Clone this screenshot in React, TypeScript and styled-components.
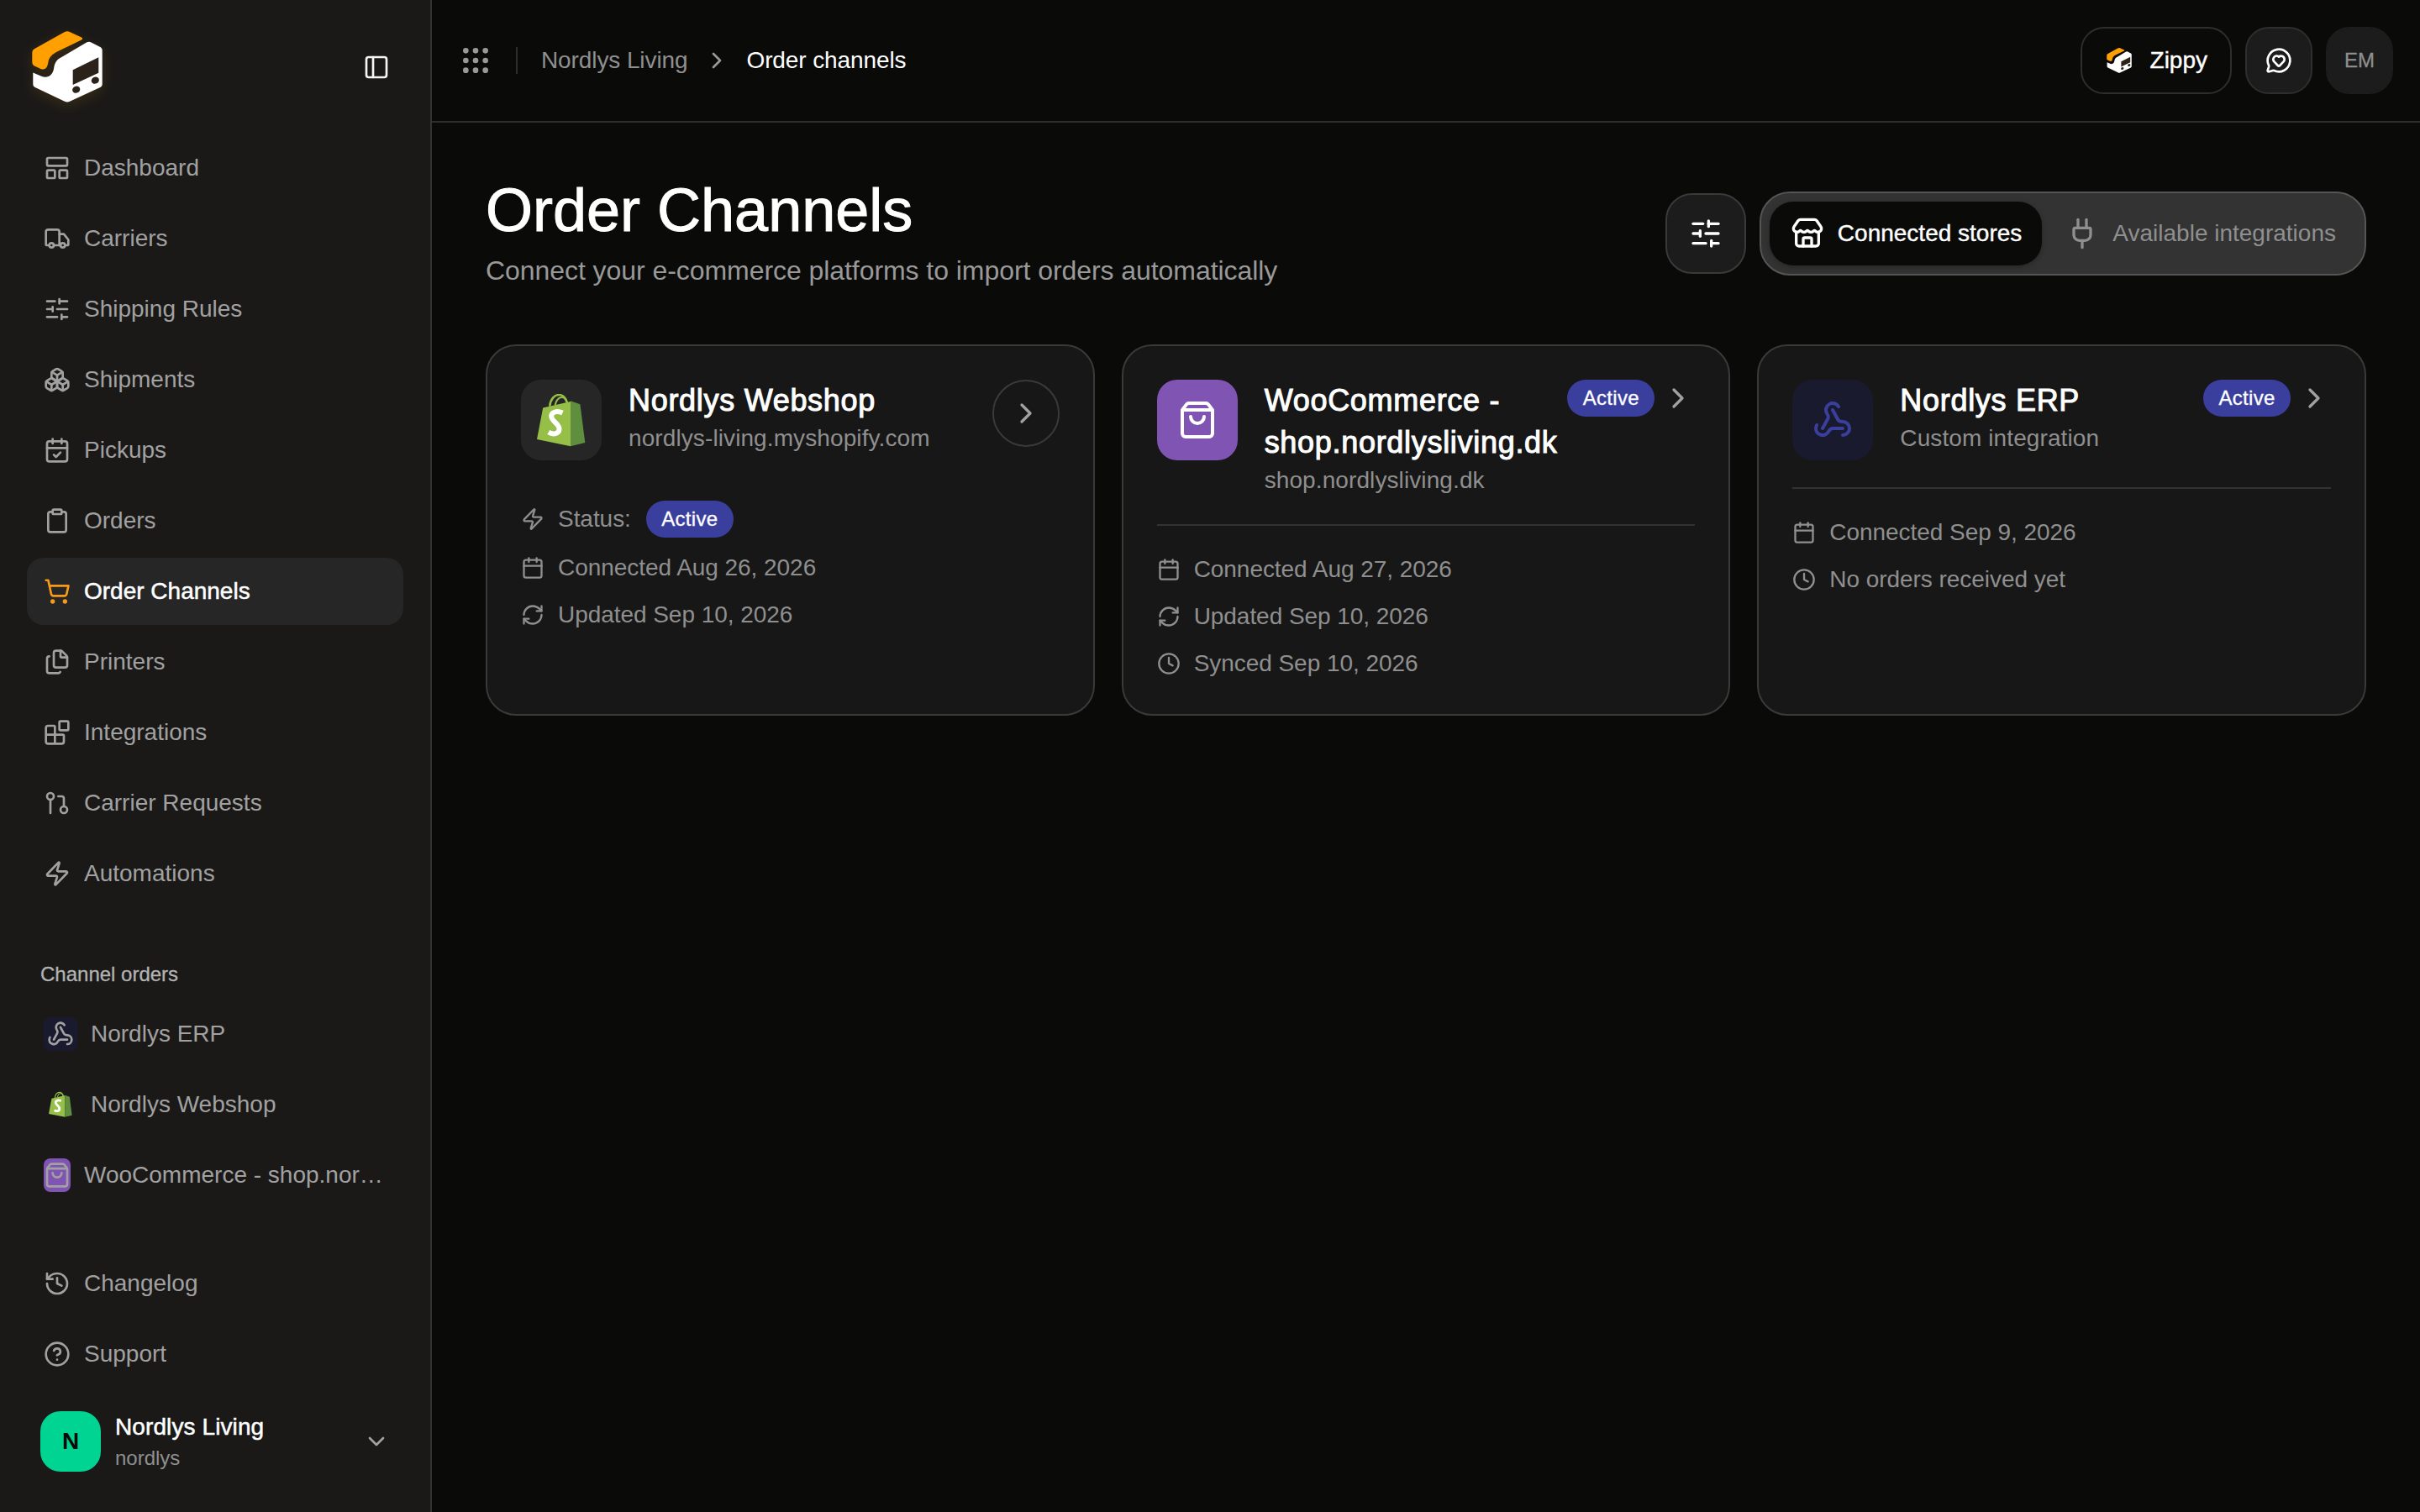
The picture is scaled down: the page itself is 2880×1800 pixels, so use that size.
import React, { ReactElement, ReactNode } from 'react'
import styled, { createGlobalStyle } from 'styled-components'
import {
  Blocks, Boxes, Calendar, CalendarCheck, ChevronDown, ChevronRight, CircleHelp, Clipboard, Clock, Files,
  GitPullRequest, Grip, History, LayoutPanelTop, MessageCircleHeart, PanelLeft, Plug, RefreshCw, ShoppingBag,
  ShoppingCart, SlidersHorizontal, Store, Truck, Webhook, Zap
} from 'lucide-react'

const GlobalStyle = createGlobalStyle`
  * { box-sizing: border-box; }
  html, body { margin: 0; padding: 0; background: #0a0a09; }
  body { font-family: "Liberation Sans", Arial, sans-serif; color: #fff; }
`

const ZippyLogo = ({ size }: { size: number }): ReactElement => (
  <svg width={size} height={size} viewBox="0 0 96 96">
    <path
      d="M44.5 6.2a8 8 0 0 1 7 0L65 12.6c1.6.8 1.6 2 0 2.8L36 29.6c-6 3-9.6 6.6-10.6 12.4-.8 5.6-2.6 9.6-8.4 8.2L9.5 46.8C7.400 45.800 6.300 44.200 6.300 42V31c0-2.500 1.100-4.200 3.400-5.300z"
      fill="#ff9f00"
    />
    <path
      d="M71 18.500a6 6 0 0 1 5.500 0l10.800 5.600c1.600.9 2.400 2.200 2.400 4V68c0 1.900-.8 3.200-2.500 4L51 88.800a7 7 0 0 1-6 0L9.800 72c-1.700-.8-2.500-2.100-2.500-4V54.500l10 4.300c7.500 2.900 13.500-1.300 14.800-9.300.9-6.300 2.800-10.400 8.400-13.100z"
      fill="#fff"
    />
    <path d="M54.700 51.300 85.300 36.300v18.400L54.700 69z" fill="#2b2319" />
    <ellipse cx="58.700" cy="74.700" rx="4.700" ry="4" transform="rotate(-24 58.700 74.700)" fill="#2b2319" />
    <ellipse cx="81.300" cy="63.700" rx="4.700" ry="4" transform="rotate(-24 81.300 63.700)" fill="#2b2319" />
  </svg>
)

const ShopifyBag = ({ width, height }: { width: number; height: number }): ReactElement => (
  <svg width={width} height={height} viewBox="0 0 59 64">
    <path d="M15.500 15C16 7 21 .8 27 1c5 .2 8 4 9.500 9.500" fill="none" stroke="#95bf47" strokeWidth="2.600" />
    <path d="M22 13.500c.8-5 4-9.500 8-9.500 3.500 0 5.500 3 6.500 6.500" fill="none" stroke="#95bf47" strokeWidth="2.200" />
    <path d="M7.300 16.700 40.700 9v54.300L0 55z" fill="#95bf47" />
    <path d="M40.700 8.300 52.300 12.300 58.300 59 40.700 63.300z" fill="#5e8e3e" />
    <path d="M31 22.800C24.500 19.800 17 21.500 17.500 27.500c.5 6 9.500 8 9.500 15 0 6-7.500 7.200-13 3.800" fill="none" stroke="#fff" strokeWidth="6" />
  </svg>
)

const Shell = styled.div`
  display: grid;
  grid-template-columns: 514px 1fr;
  height: 1800px;
  overflow: hidden;
`

const Sidebar = styled.aside`
  display: flex;
  flex-direction: column;
  height: 1800px;
  background: #1a1918;
  border-right: 2px solid #333;
`

const LogoRow = styled.div`
  display: flex;
  align-items: center;
  justify-content: space-between;
  padding: 32px;
`

const LogoMark = styled.div`
  display: flex;
  width: 96px;
  height: 96px;
  filter: drop-shadow(0 4px 8px rgba(255, 160, 0, .14));
`

const CollapseButton = styled.div`
  display: flex;
  align-items: center;
  justify-content: center;
  width: 64px;
  height: 64px;
  color: #f5f5f5;
`

const NavList = styled.nav`
  display: flex;
  flex-direction: column;
  gap: 4px;
  padding: 0 32px;
`

const NavItem = styled.div<{ $active?: boolean }>`
  display: flex;
  align-items: center;
  gap: 16px;
  height: 80px;
  padding: 0 22px 0 20px;
  border-radius: 20px;
  font-size: 28px;
  background: ${({ $active }) => ($active ? '#262626' : 'transparent')};
  color: ${({ $active }) => ($active ? '#fff' : '#a1a1a1')};
  -webkit-text-stroke: ${({ $active }) => ($active ? '.5px' : '0')};

  svg { flex-shrink: 0; color: ${({ $active }) => ($active ? '#f59a1b' : '#a1a1a1')}; }
`

const NavText = styled.span`
  min-width: 0;
  white-space: nowrap;
  overflow: hidden;
  text-overflow: ellipsis;
`

const SectionLabel = styled.div`
  margin: 64px 0 15px;
  padding-left: 48px;
  font-size: 24px;
  line-height: 32px;
  -webkit-text-stroke: .3px;
  color: #b3b3b3;
`

const ChannelIcon = styled.div<{ $bg?: string; $width: number }>`
  display: flex;
  align-items: center;
  justify-content: center;
  flex-shrink: 0;
  width: ${({ $width }) => $width}px;
  height: 40px;
  border-radius: 8px;
  background: ${({ $bg }) => $bg || 'transparent'};
`

const SidebarFoot = styled.div`
  display: flex;
  flex-direction: column;
  margin-top: auto;
  padding: 0 32px 48px;
  gap: 4px;
`

const OrgRow = styled.div`
  display: flex;
  align-items: center;
  height: 72px;
  margin-top: 24px;
  padding: 0 16px;
`

const OrgAvatar = styled.div`
  display: flex;
  align-items: center;
  justify-content: center;
  width: 72px;
  height: 72px;
  border-radius: 24px;
  background: #00d492;
  color: #0a0a0a;
  font-size: 28px;
  font-weight: 700;
`

const OrgText = styled.div`
  display: flex;
  flex: 1;
  flex-direction: column;
  gap: 4px;
  margin-left: 17px;
`

const OrgName = styled.div`
  font-size: 28px;
  line-height: 36px;
  letter-spacing: .1px;
  -webkit-text-stroke: .5px;
  color: #fff;
`

const OrgSlug = styled.div`
  font-size: 24px;
  line-height: 30px;
  color: #8f8f8f;
`

const Main = styled.main`
  display: flex;
  flex-direction: column;
  min-width: 0;
`

const TopBar = styled.header`
  display: flex;
  align-items: center;
  height: 146px;
  padding: 0 32px;
  border-bottom: 2px solid #2e2e2e;
`

const Crumbs = styled.div`
  display: flex;
  align-items: center;
  flex: 1;
  color: #999;

  svg { flex-shrink: 0; }
`

const CrumbDivider = styled.div`
  width: 2px;
  height: 32px;
  margin: 0 28px;
  background: #2e2e2e;
`

const Crumb = styled.span<{ $current?: boolean }>`
  font-size: 28px;
  letter-spacing: -.1px;
  color: ${({ $current }) => ($current ? '#fff' : '#8f8f8f')};
`

const CrumbArrow = styled.div`
  display: flex;
  margin: 0 19px;
  color: #999;
`

const TopActions = styled.div`
  display: flex;
  align-items: center;
  gap: 16px;
`

const ZippyButton = styled.div`
  display: flex;
  align-items: center;
  gap: 20px;
  height: 80px;
  padding: 0 27px;
  border: 2px solid #2e2e2e;
  border-radius: 28px;
  font-size: 28px;
  -webkit-text-stroke: .4px;
`

const SquareButton = styled.div<{ $plain?: boolean }>`
  display: flex;
  align-items: center;
  justify-content: center;
  width: 80px;
  height: 80px;
  border-radius: 28px;
  background: #1c1c1c;
  border: 2px solid ${({ $plain }) => ($plain ? '#1c1c1c' : '#2e2e2e')};
  color: ${({ $plain }) => ($plain ? '#8f8f8f' : '#fff')};
  font-size: 24px;
  -webkit-text-stroke: .3px;
`

const Content = styled.div`
  padding: 64px;
`

const PageHead = styled.div`
  display: flex;
  align-items: center;
  justify-content: space-between;
  margin-bottom: 64px;
`

const PageTitle = styled.h1`
  margin: 0;
  font-size: 72px;
  line-height: 80px;
  font-weight: 400;
  -webkit-text-stroke: 1px;
`

const PageSubtitle = styled.p`
  margin: 8px 0 0;
  font-size: 32px;
  line-height: 48px;
  letter-spacing: -.06px;
  color: #999;
`

const HeadActions = styled.div`
  display: flex;
  align-items: center;
  gap: 16px;
`

const FilterButton = styled.div`
  display: flex;
  align-items: center;
  justify-content: center;
  width: 96px;
  height: 96px;
  border-radius: 32px;
  background: #1c1c1c;
  border: 2px solid #3a3a3a;
`

const Tabs = styled.div`
  display: flex;
  align-items: center;
  gap: 4px;
  height: 100px;
  padding: 0 10px;
  border-radius: 36px;
  background: #333;
  border: 2px solid #555;
`

const Tab = styled.div<{ $active?: boolean }>`
  display: flex;
  align-items: center;
  gap: 16px;
  height: 76px;
  padding: 0 24px 0 ${({ $active }) => ($active ? 25 : 24)}px;
  border-radius: 28px;
  font-size: 28px;
  -webkit-text-stroke: ${({ $active }) => ($active ? '.4px' : '0')};
  background: ${({ $active }) => ($active ? '#0a0a09' : 'transparent')};
  color: ${({ $active }) => ($active ? '#fff' : '#8f8f8f')};
  box-shadow: ${({ $active }) => ($active ? '0 2px 6px rgba(0, 0, 0, .25)' : 'none')};
`

const CardGrid = styled.div`
  display: grid;
  grid-template-columns: repeat(3, 1fr);
  gap: 32px;
`

const Card = styled.article`
  padding: 40px;
  border: 2px solid #3a3a3a;
  border-radius: 36px;
  background: #171717;
`

const CardHeader = styled.div<{ $ruled?: boolean }>`
  display: flex;
  align-items: flex-start;
  gap: 32px;
  padding-bottom: ${({ $ruled }) => ($ruled ? 32 : 0)}px;
  margin-bottom: ${({ $ruled }) => ($ruled ? 32 : 48)}px;
  border-bottom: ${({ $ruled }) => ($ruled ? '2px solid #333' : 'none')};
`

const CardIcon = styled.div<{ $bg: string }>`
  display: flex;
  align-items: center;
  justify-content: center;
  flex-shrink: 0;
  width: 96px;
  height: 96px;
  border-radius: 24px;
  background: ${({ $bg }) => $bg};
`

const CardHeading = styled.div`
  flex: 1;
  min-width: 0;
`

const CardTitle = styled.div`
  font-size: 36px;
  line-height: 50px;
  letter-spacing: .7px;
  -webkit-text-stroke: 1px;
`

const CardSubtitle = styled.div`
  font-size: 28px;
  line-height: 40px;
  letter-spacing: .1px;
  color: #8f8f8f;
`

const CircleArrow = styled.div`
  display: flex;
  align-items: center;
  justify-content: center;
  flex-shrink: 0;
  width: 80px;
  height: 80px;
  border-radius: 50%;
  border: 2px solid #3a3a3a;
  color: #a1a1a1;
`

const CardActions = styled.div`
  display: flex;
  align-items: center;
  flex-shrink: 0;
  gap: 8px;
  margin-left: -32px;
  color: #a1a1a1;
`

const Badge = styled.span`
  display: inline-flex;
  align-items: center;
  justify-content: center;
  width: 104px;
  height: 44px;
  border-radius: 22px;
  background: #3a3f9e;
  color: #fff;
  font-size: 24px;
  letter-spacing: .3px;
  -webkit-text-stroke: .3px;
`

const MetaList = styled.div`
  display: flex;
  flex-direction: column;
  gap: 16px;
`

const MetaRow = styled.div`
  display: flex;
  align-items: center;
  gap: 16px;
  font-size: 28px;
  line-height: 40px;
  letter-spacing: -.05px;
  color: #8f8f8f;

  svg { flex-shrink: 0; }

  ${Badge} { margin-left: 2px; }
`

const navItems: [string, ReactNode, boolean?][] = [
  ['Dashboard', <LayoutPanelTop size={32} />],
  ['Carriers', <Truck size={32} />],
  ['Shipping Rules', <SlidersHorizontal size={32} />],
  ['Shipments', <Boxes size={32} />],
  ['Pickups', <CalendarCheck size={32} />],
  ['Orders', <Clipboard size={32} />],
  ['Order Channels', <ShoppingCart size={32} />, true],
  ['Printers', <Files size={32} />],
  ['Integrations', <Blocks size={32} />],
  ['Carrier Requests', <GitPullRequest size={32} />],
  ['Automations', <Zap size={32} />]
]

const App = (): ReactElement => (
  <Shell>
    <GlobalStyle />
    <Sidebar>
      <LogoRow>
        <LogoMark><ZippyLogo size={96} /></LogoMark>
        <CollapseButton><PanelLeft size={32} /></CollapseButton>
      </LogoRow>
      <NavList>
        {navItems.map(([label, icon, active]) => (
          <NavItem key={label} $active={active}>{icon}<NavText>{label}</NavText></NavItem>
        ))}
      </NavList>
      <SectionLabel>Channel orders</SectionLabel>
      <NavList>
        <NavItem>
          <ChannelIcon $bg="#1a1a2e" $width={40}><Webhook size={32} /></ChannelIcon>
          <NavText>Nordlys ERP</NavText>
        </NavItem>
        <NavItem>
          <ChannelIcon $width={40}><ShopifyBag width={28} height={32} /></ChannelIcon>
          <NavText>Nordlys Webshop</NavText>
        </NavItem>
        <NavItem>
          <ChannelIcon $bg="#7f54b3" $width={32}><ShoppingBag size={32} /></ChannelIcon>
          <NavText>WooCommerce - shop.nordlysliving.dk</NavText>
        </NavItem>
      </NavList>
      <SidebarFoot>
        <NavItem><History size={32} /><NavText>Changelog</NavText></NavItem>
        <NavItem><CircleHelp size={32} /><NavText>Support</NavText></NavItem>
        <OrgRow>
          <OrgAvatar>N</OrgAvatar>
          <OrgText>
            <OrgName>Nordlys Living</OrgName>
            <OrgSlug>nordlys</OrgSlug>
          </OrgText>
          <ChevronDown size={32} color="#a1a1a1" />
        </OrgRow>
      </SidebarFoot>
    </Sidebar>
    <Main>
      <TopBar>
        <Crumbs>
          <Grip size={40} />
          <CrumbDivider />
          <Crumb>Nordlys Living</Crumb>
          <CrumbArrow><ChevronRight size={32} /></CrumbArrow>
          <Crumb $current>Order channels</Crumb>
        </Crumbs>
        <TopActions>
          <ZippyButton><ZippyLogo size={34} />Zippy</ZippyButton>
          <SquareButton><MessageCircleHeart size={32} /></SquareButton>
          <SquareButton $plain>EM</SquareButton>
        </TopActions>
      </TopBar>
      <Content>
        <PageHead>
          <div>
            <PageTitle>Order Channels</PageTitle>
            <PageSubtitle>Connect your e-commerce platforms to import orders automatically</PageSubtitle>
          </div>
          <HeadActions>
            <FilterButton><SlidersHorizontal size={40} /></FilterButton>
            <Tabs>
              <Tab $active><Store size={40} />Connected stores</Tab>
              <Tab><Plug size={40} />Available integrations</Tab>
            </Tabs>
          </HeadActions>
        </PageHead>
        <CardGrid>
          <Card>
            <CardHeader>
              <CardIcon $bg="#262626"><ShopifyBag width={58} height={63} /></CardIcon>
              <CardHeading>
                <CardTitle>Nordlys Webshop</CardTitle>
                <CardSubtitle>nordlys-living.myshopify.com</CardSubtitle>
              </CardHeading>
              <CircleArrow><ChevronRight size={40} /></CircleArrow>
            </CardHeader>
            <MetaList>
              <MetaRow><Zap size={28} />Status:<Badge>Active</Badge></MetaRow>
              <MetaRow><Calendar size={28} />Connected Aug 26, 2026</MetaRow>
              <MetaRow><RefreshCw size={28} />Updated Sep 10, 2026</MetaRow>
            </MetaList>
          </Card>
          <Card>
            <CardHeader $ruled>
              <CardIcon $bg="#7f54b3"><ShoppingBag size={48} color="#fff" /></CardIcon>
              <CardHeading>
                <CardTitle>WooCommerce - shop.nordlysliving.dk</CardTitle>
                <CardSubtitle>shop.nordlysliving.dk</CardSubtitle>
              </CardHeading>
              <CardActions><Badge>Active</Badge><ChevronRight size={40} /></CardActions>
            </CardHeader>
            <MetaList>
              <MetaRow><Calendar size={28} />Connected Aug 27, 2026</MetaRow>
              <MetaRow><RefreshCw size={28} />Updated Sep 10, 2026</MetaRow>
              <MetaRow><Clock size={28} />Synced Sep 10, 2026</MetaRow>
            </MetaList>
          </Card>
          <Card>
            <CardHeader $ruled>
              <CardIcon $bg="#1a1a2e"><Webhook size={48} color="#3a3f9e" /></CardIcon>
              <CardHeading>
                <CardTitle>Nordlys ERP</CardTitle>
                <CardSubtitle>Custom integration</CardSubtitle>
              </CardHeading>
              <CardActions><Badge>Active</Badge><ChevronRight size={40} /></CardActions>
            </CardHeader>
            <MetaList>
              <MetaRow><Calendar size={28} />Connected Sep 9, 2026</MetaRow>
              <MetaRow><Clock size={28} />No orders received yet</MetaRow>
            </MetaList>
          </Card>
        </CardGrid>
      </Content>
    </Main>
  </Shell>
)

export default App
